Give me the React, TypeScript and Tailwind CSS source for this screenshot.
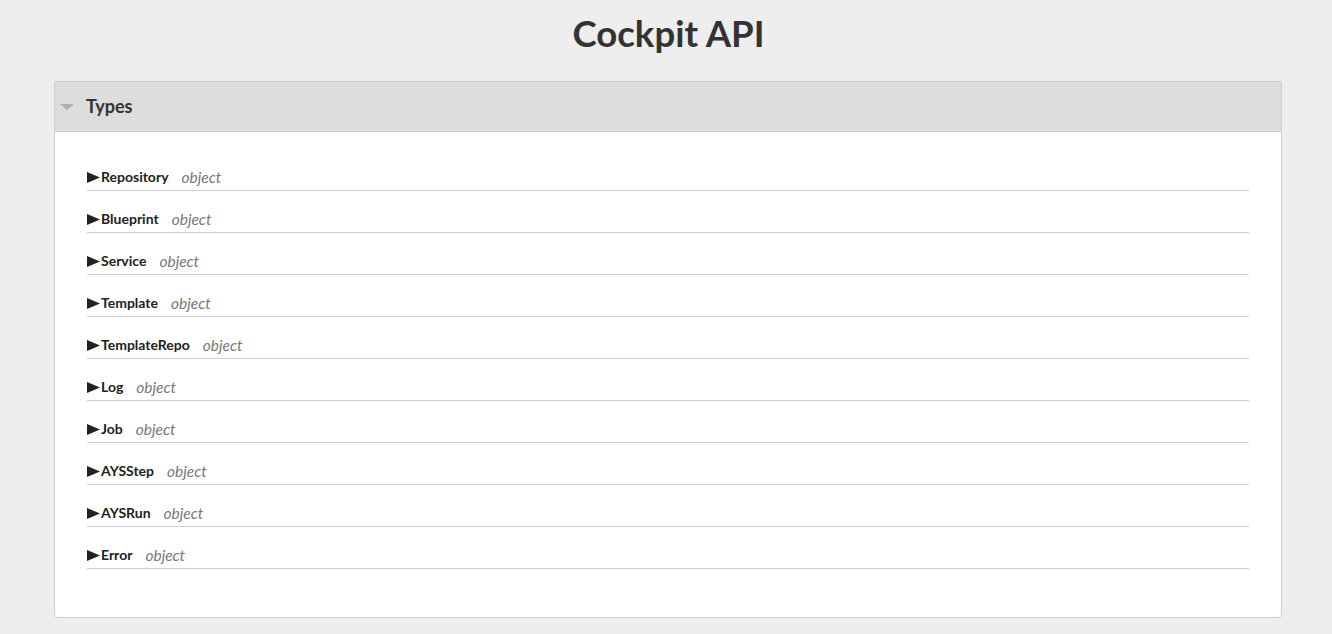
export default function App() {
  const types = [
    'Repository',
    'Blueprint',
    'Service',
    'Template',
    'TemplateRepo',
    'Log',
    'Job',
    'AYSStep',
    'AYSRun',
    'Error',
  ];

  return (
    <div className="min-h-[634px] bg-[#eeeeee] font-['Lato',sans-serif] text-[#333333]">
      <h1 className="pt-[12px] pb-[27px] pl-[5px] text-center text-[36.6px] font-bold leading-[42px]">Cockpit API</h1>

      <div className="ml-[54px] mr-[50px] rounded-b-[4px] border border-[#cccccc] bg-white">
        <div className="flex h-[50px] items-center border-b border-[#cccccc] bg-[#dddddd]">
          <svg width="14" height="8" viewBox="0 0 14 8" className="ml-[5px] mr-[12px]">
            <polygon points="0,1 14,1 7,7" fill="#b0b0b0" />
          </svg>
          <h2 className="text-[18px] font-bold">Types</h2>
        </div>

        <div className="px-[32px] pt-[17px] pb-[48px]">
          {types.map((name) => (
            <div key={name} className="flex h-[42px] items-end border-b border-[#cccccc] pb-[3px] leading-5">
              <span className="flex items-center text-[14px] font-bold text-[#222]">
                <svg width="13" height="11" viewBox="0 0 13 11" className="mr-[1px]">
                  <polygon points="0,0 13,5.5 0,11" fill="#222" />
                </svg>
                {name}
              </span>
              <span className="ml-[13px] text-[15.5px] italic text-[#777]">object</span>
            </div>
          ))}
        </div>
      </div>
    </div>
  );
}
